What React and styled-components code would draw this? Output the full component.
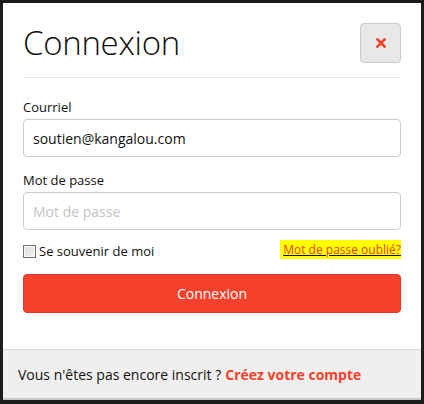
import styled, { createGlobalStyle } from "styled-components";

const GlobalStyle = createGlobalStyle`
  html, body {
    margin: 0;
    padding: 0;
    background: #1c1c1c;
  }
  body {
    font-family: "Open Sans", "DejaVu Sans", sans-serif;
    color: #222;
  }
`;

const Frame = styled.div`
  width: 424px;
  height: 404px;
  padding: 3px 3px 4px 3px;
  box-sizing: border-box;
`;

const Modal = styled.div`
  background: #fff;
  height: 100%;
  display: flex;
  flex-direction: column;
  border-bottom: 2px solid #c8c8c8;
  box-sizing: border-box;
`;

const Header = styled.div`
  margin: 0 20px;
  padding: 20px 0 14px;
  display: flex;
  justify-content: space-between;
  align-items: flex-start;
  border-bottom: 1px solid #e5e5e5;
`;

const Title = styled.h1`
  margin: 0;
  font-size: 33px;
  font-weight: 300;
  line-height: 40px;
  letter-spacing: -0.3px;
  color: #111;
`;

const CloseButton = styled.button`
  width: 41px;
  height: 40px;
  background: #e8e8e8;
  border: 1px solid #ccc;
  border-radius: 4px;
  display: flex;
  align-items: center;
  justify-content: center;
  padding: 0;
  cursor: pointer;
`;

const Body = styled.form`
  flex: 1;
  padding: 20px 20px 0;
  display: flex;
  flex-direction: column;
`;

const Label = styled.label`
  font-size: 13px;
  line-height: 18px;
  margin-bottom: 3px;
  color: #111;
`;

const Input = styled.input`
  height: 38px;
  box-sizing: border-box;
  border: 1px solid #ccc;
  border-radius: 4px;
  padding: 0 9px;
  font-family: inherit;
  font-size: 14px;
  color: #111;
  margin-bottom: ${(p) => p.$gap}px;
  outline: none;
  &::placeholder {
    color: #c4c4c4;
  }
`;

const OptionsRow = styled.div`
  display: flex;
  justify-content: space-between;
  align-items: center;
  height: 20px;
  margin-bottom: 13px;
`;

const Remember = styled.label`
  display: flex;
  align-items: center;
  font-size: 13px;
  color: #111;
  gap: 3px;
`;

const Check = styled.input`
  appearance: none;
  margin: 0;
  width: 13px;
  height: 13px;
  box-sizing: border-box;
  border: 1px solid #707070;
  background: linear-gradient(135deg, #dcdcdc, #f4f4f4);
  box-shadow: inset 0 0 0 1px #fafafa;
`;

const Forgot = styled.a`
  font-size: 12px;
  color: #e8401f;
  background: #ffff00;
  text-decoration: underline;
  text-decoration-color: #111;
  padding: 1px 0 1px 3px;
  margin-top: -3px;
`;

const Submit = styled.button`
  height: 39px;
  background: #f5412c;
  border: 1px solid #d9372a;
  border-radius: 4px;
  color: #fff;
  font-family: inherit;
  font-size: 14px;
  cursor: pointer;
`;

const Footer = styled.div`
  border-top: 1px solid #dcdcdc;
  background: #efefef;
  height: 48px;
  padding: 0 15px;
  display: flex;
  align-items: center;
  font-size: 14px;
  color: #111;
`;

const Signup = styled.a`
  color: #f5412c;
  font-weight: 700;
  margin-left: 4px;
  text-decoration: none;
`;

export default function App() {
  return (
    <>
      <GlobalStyle />
      <Frame>
        <Modal>
          <Header>
            <Title>Connexion</Title>
            <CloseButton aria-label="Fermer">
              <svg width="10" height="10" viewBox="0 0 10 10">
                <path d="M1.5 1.5 L8.5 8.5 M8.5 1.5 L1.5 8.5" stroke="#f5412c" strokeWidth="2.6" strokeLinecap="square" />
              </svg>
            </CloseButton>
          </Header>
          <Body>
            <Label>Courriel</Label>
            <Input $gap={14} defaultValue="soutien@kangalou.com" />
            <Label>Mot de passe</Label>
            <Input $gap={11} type="password" placeholder="Mot de passe" />
            <OptionsRow>
              <Remember>
                <Check type="checkbox" />
                Se souvenir de moi
              </Remember>
              <Forgot href="#">Mot de passe oublié?</Forgot>
            </OptionsRow>
            <Submit type="button">Connexion</Submit>
          </Body>
          <Footer>
            Vous n'êtes pas encore inscrit ?<Signup href="#">Créez votre compte</Signup>
          </Footer>
        </Modal>
      </Frame>
    </>
  );
}
